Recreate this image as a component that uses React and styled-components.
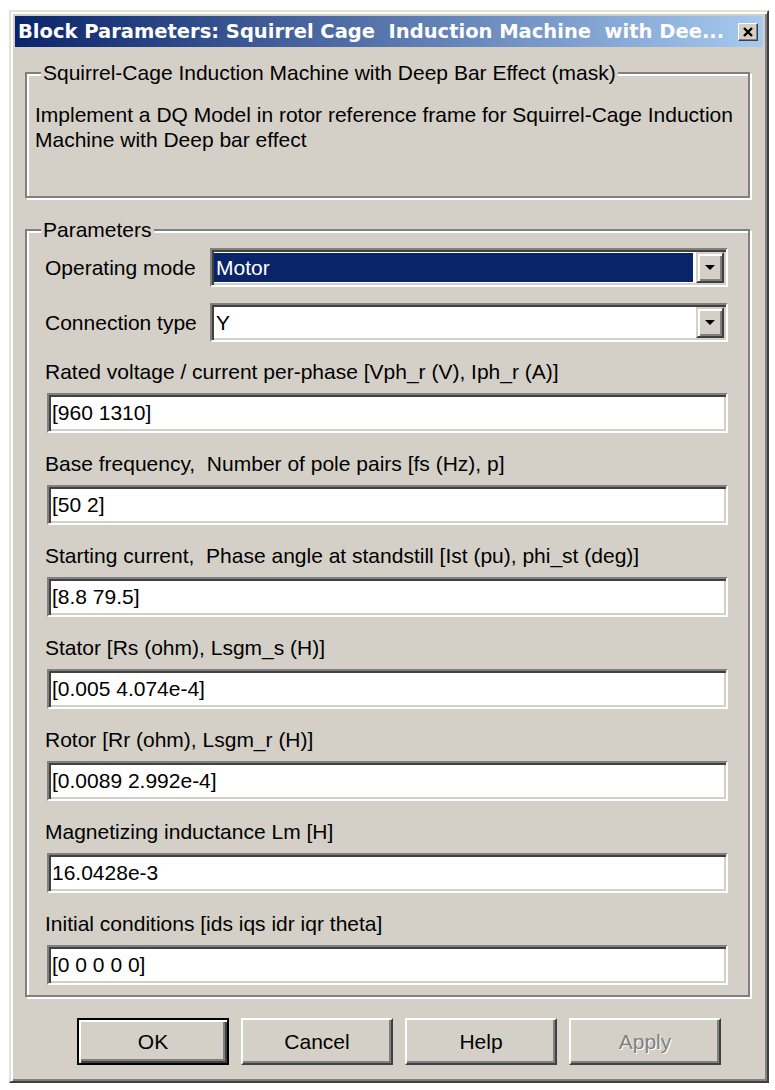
import React from 'react'
import styled, { createGlobalStyle } from 'styled-components'

const GlobalStyle = createGlobalStyle`
html, body {
    margin: 0;
    padding: 0;
    background: #fff;
}
body {
    font-family: "Liberation Sans", Arial, sans-serif;
}
`

const params = [
    { label: 'Rated voltage / current per-phase [Vph_r (V), Iph_r (A)]', value: '[960 1310]' },
    { label: 'Base frequency,  Number of pole pairs [fs (Hz), p]', value: '[50 2]' },
    { label: 'Starting current,  Phase angle at standstill [Ist (pu), phi_st (deg)]', value: '[8.8 79.5]' },
    { label: 'Stator [Rs (ohm), Lsgm_s (H)]', value: '[0.005 4.074e-4]' },
    { label: 'Rotor [Rr (ohm), Lsgm_r (H)]', value: '[0.0089 2.992e-4]' },
    { label: 'Magnetizing inductance Lm [H]', value: '16.0428e-3' },
    { label: 'Initial conditions [ids iqs idr iqr theta]', value: '[0 0 0 0 0]' },
]

const Arrow = () => (
    <svg width="10" height="5" viewBox="0 0 10 5">
        <polygon points="0,0 10,0 5,5" fill="#000" />
    </svg>
)

const App = () => {
    return (
        <Page>
            <GlobalStyle />
            <Window>
                <TitleBar>
                    <TitleText>Block Parameters: Squirrel Cage  Induction Machine  with Dee...</TitleText>
                    <CloseButton>
                        <svg width="12" height="10" viewBox="0 0 12 10">
                            <path d="M2 1 L10 9 M10 1 L2 9" stroke="#000" strokeWidth="2.4" fill="none" />
                        </svg>
                    </CloseButton>
                </TitleBar>
                <Client>
                    <Group $top={14}>
                        <Legend>Squirrel-Cage Induction Machine with Deep Bar Effect (mask)</Legend>
                        <Description>
                            Implement a DQ Model in rotor reference frame for Squirrel-Cage Induction<br />
                            Machine with Deep bar effect
                        </Description>
                    </Group>
                    <Group $top={20}>
                        <Legend>Parameters</Legend>
                        <ParamBody>
                            <ComboRow>
                                <ComboLabel>Operating mode</ComboLabel>
                                <Combo>
                                    <ComboValue $selected>Motor</ComboValue>
                                    <DropButton><Arrow /></DropButton>
                                </Combo>
                            </ComboRow>
                            <ComboRow>
                                <ComboLabel>Connection type</ComboLabel>
                                <Combo>
                                    <ComboValue>Y</ComboValue>
                                    <DropButton><Arrow /></DropButton>
                                </Combo>
                            </ComboRow>
                            {params.map((p) => (
                                <Param key={p.label}>
                                    <Label>{p.label}</Label>
                                    <Edit type="text" defaultValue={p.value} readOnly />
                                </Param>
                            ))}
                        </ParamBody>
                    </Group>
                    <ButtonRow>
                        <Button $default>OK</Button>
                        <Button>Cancel</Button>
                        <Button>Help</Button>
                        <Button disabled>Apply</Button>
                    </ButtonRow>
                </Client>
            </Window>
        </Page>
    )
}

export default App

const Page = styled.div`
padding: 10px 0 0 9px;
`
const Window = styled.div`
width: 760px;
box-sizing: border-box;
background: #d4d0c8;
border: 2px solid;
border-color: #e4e1da #404040 #404040 #e4e1da;
box-shadow: inset 2px 2px 0 #fff, inset -2px -2px 0 #808080;
padding: 4px;
display: flex;
flex-direction: column;
`
const TitleBar = styled.div`
height: 31px;
display: flex;
align-items: center;
justify-content: space-between;
padding: 0 5px 0 3px;
background: linear-gradient(to right, #0a246a, #a6caf0);
`
const TitleText = styled.span`
color: #fff;
font-family: "DejaVu Sans", Verdana, sans-serif;
font-weight: bold;
font-size: 19.5px;
white-space: pre;
overflow: hidden;
`
const CloseButton = styled.div`
width: 20px;
height: 18px;
flex-shrink: 0;
box-sizing: border-box;
display: flex;
align-items: center;
justify-content: center;
background: #d4d0c8;
border: 1px solid;
border-color: #fff #404040 #404040 #fff;
box-shadow: inset -1px -1px 0 #808080;
`
const Client = styled.div`
display: flex;
flex-direction: column;
padding: 0 13px 12px 10px;
`
const Group = styled.fieldset`
margin: ${props => props.$top}px 0 0;
padding: 0;
min-width: 0;
border: 2px solid #808080;
box-shadow: inset 2px 2px 0 #fff, 2px 2px 0 #fff;
`
const Legend = styled.legend`
margin-left: 14px;
padding: 0 2px;
font-size: 21px;
line-height: 24px;
color: #000;
background: #d4d0c8;
`
const Description = styled.div`
padding: 17px 8px 44px 8px;
font-size: 21px;
line-height: 25px;
color: #000;
white-space: nowrap;
`
const ParamBody = styled.div`
display: flex;
flex-direction: column;
padding: 6px 20px 10px 18px;
`
const ComboRow = styled.div`
display: flex;
align-items: center;
height: 39px;
& + & {
    margin-top: 16px;
}
`
const ComboLabel = styled.span`
width: 165px;
flex-shrink: 0;
font-size: 21px;
color: #000;
white-space: nowrap;
`
const Combo = styled.div`
flex: 1;
height: 39px;
box-sizing: border-box;
display: flex;
padding: 2px;
background: #fff;
border: 2px solid;
border-color: #808080 #fff #fff #808080;
box-shadow: inset 2px 2px 0 #404040, inset -2px -2px 0 #d4d0c8;
`
const ComboValue = styled.div`
flex: 1;
margin: 1px 3px 1px 0;
padding-left: 2px;
display: flex;
align-items: center;
font-size: 21px;
color: ${props => props.$selected ? '#fff' : '#000'};
background: ${props => props.$selected ? '#0a246a' : '#fff'};
`
const DropButton = styled.div`
width: 28px;
box-sizing: border-box;
display: flex;
align-items: center;
justify-content: center;
background: #d4d0c8;
border: 2px solid;
border-color: #d4d0c8 #404040 #404040 #d4d0c8;
box-shadow: inset 2px 2px 0 #fff, inset -2px -2px 0 #808080;
`
const Param = styled.div`
display: flex;
flex-direction: column;
gap: 9px;
margin-top: 18px;
& + & {
    margin-top: 19px;
}
`
const Label = styled.span`
font-size: 21px;
line-height: 24px;
color: #000;
white-space: pre;
`
const Edit = styled.input`
width: calc(100% - 2px);
height: 40px;
margin: 0 0 0 2px;
box-sizing: border-box;
padding: 0 0 0 3px;
border: 2px solid;
border-color: #808080 #fff #fff #808080;
box-shadow: inset 2px 2px 0 #404040, inset -2px -2px 0 #d4d0c8;
background: #fff;
font-family: "Liberation Sans", Arial, sans-serif;
font-size: 21px;
color: #000;
outline: none;
`
const ButtonRow = styled.div`
display: flex;
gap: 12px;
margin-top: 21px;
padding-left: 52px;
`
const Button = styled.button`
width: 152px;
height: 47px;
box-sizing: border-box;
padding: 0;
background: #d4d0c8;
font-family: "Liberation Sans", Arial, sans-serif;
font-size: 21px;
color: #000;
border: 2px solid;
border-color: ${props => props.$default ? '#000' : '#fff #404040 #404040 #fff'};
box-shadow: ${props => props.$default
        ? 'inset 2px 2px 0 #fff, inset -2px -2px 0 #404040, inset -4px -4px 0 #808080'
        : 'inset -2px -2px 0 #808080, inset 2px 2px 0 #d4d0c8'};
&:disabled {
    color: #808080;
    text-shadow: 1px 1px 0 #fff;
}
`
